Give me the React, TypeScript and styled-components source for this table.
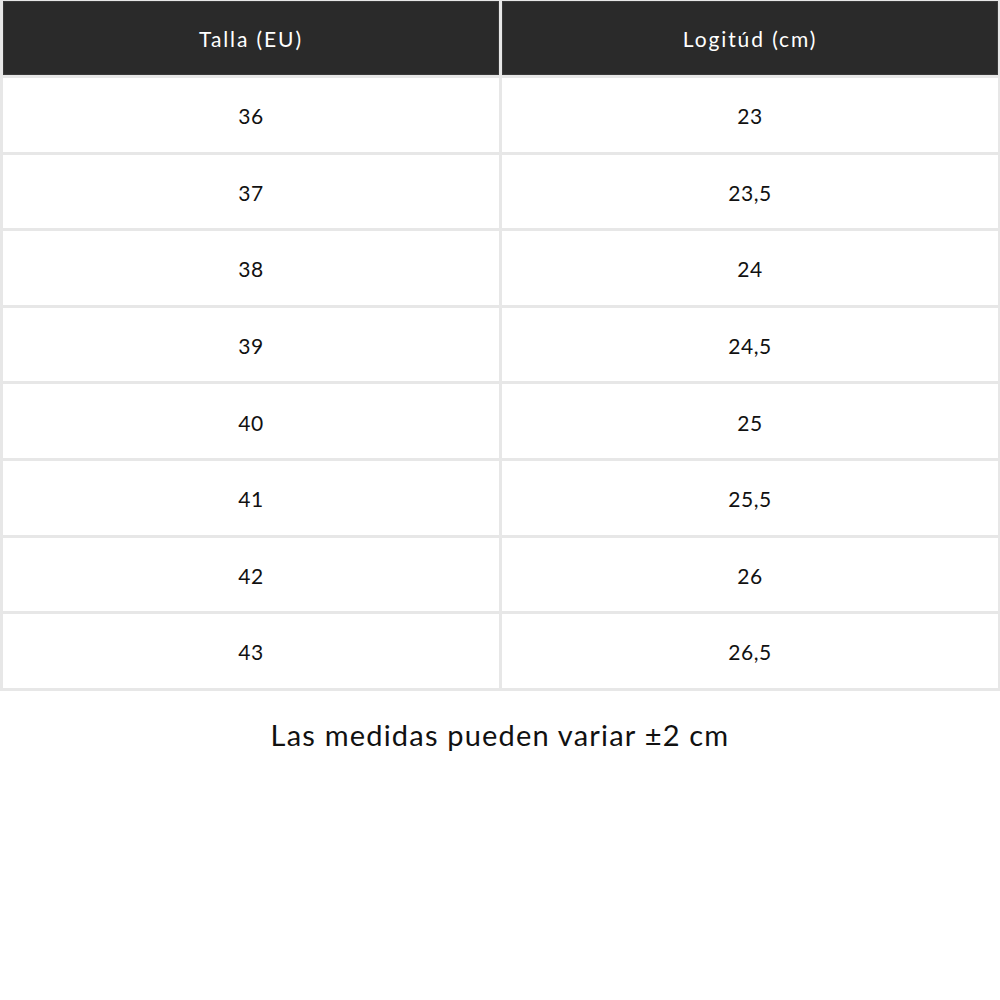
import React from "react";
import styled, { createGlobalStyle } from "styled-components";

const Global = createGlobalStyle`
  html, body { margin: 0; padding: 0; background: #ffffff; }
  body { font-family: "Lato", "Noto Sans", sans-serif; }
`;

const Page = styled.div`
  width: 1000px;
  height: 1000px;
  background: #ffffff;
  display: flex;
  flex-direction: column;
`;

const Table = styled.div`
  display: grid;
  grid-template-columns: 496px 496px;
  grid-template-rows: 74px repeat(8, 73.6px);
  column-gap: 3px;
  row-gap: 3px;
  padding: 1px 2px 3px 3px;
  background: #e7e7e7;
  width: 1000px;
  box-sizing: border-box;
`;

const HeadCell = styled.div`
  background: #2a2a2a;
  color: #ffffff;
  display: flex;
  align-items: center;
  justify-content: center;
  font-size: 21px;
  letter-spacing: 1.9px;
  box-shadow: inset 0 0 0 1px #3a3a3a;
`;

const Cell = styled.div`
  background: #ffffff;
  color: #111111;
  display: flex;
  align-items: center;
  justify-content: center;
  font-size: 21px;
  letter-spacing: 0.6px;
  padding-top: 2px;
`;

const Note = styled.div`
  margin-top: 26px;
  text-align: center;
  font-size: 29px;
  color: #111111;
  letter-spacing: 1.2px;
`;

const rows: [string, string][] = [
  ["36", "23"],
  ["37", "23,5"],
  ["38", "24"],
  ["39", "24,5"],
  ["40", "25"],
  ["41", "25,5"],
  ["42", "26"],
  ["43", "26,5"],
];

export default function App() {
  return (
    <Page>
      <Global />
      <Table>
        <HeadCell>Talla (EU)</HeadCell>
        <HeadCell>Logitúd (cm)</HeadCell>
        {rows.map(([a, b]) => (
          <React.Fragment key={a}>
            <Cell>{a}</Cell>
            <Cell>{b}</Cell>
          </React.Fragment>
        ))}
      </Table>
      <Note>Las medidas pueden variar ±2 cm</Note>
    </Page>
  );
}
